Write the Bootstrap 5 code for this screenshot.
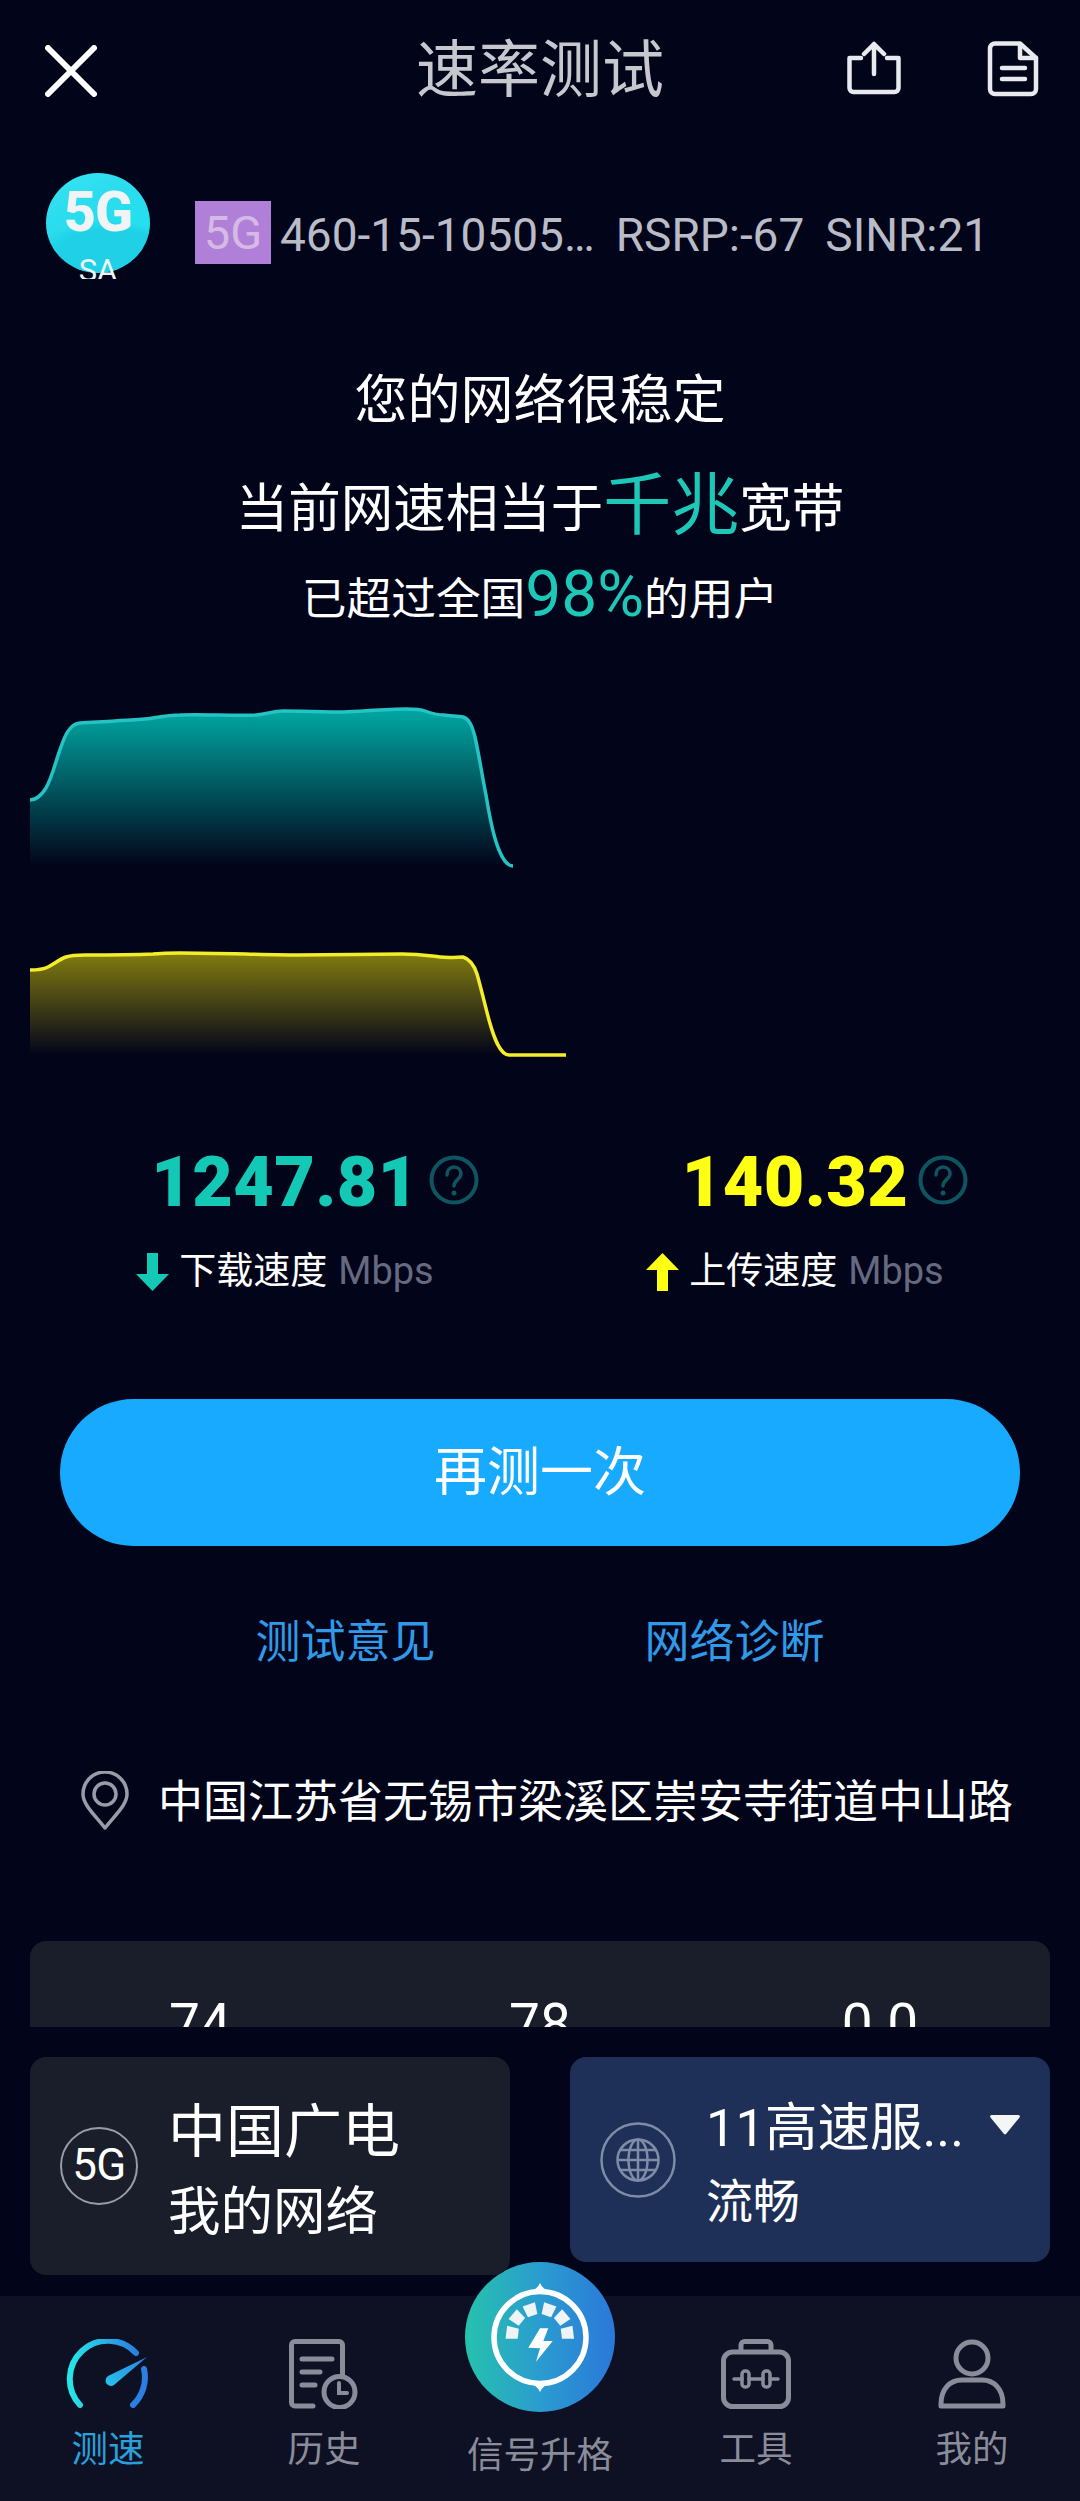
<!doctype html>
<html lang="zh-CN">
<head>
<meta charset="utf-8">
<title>速率测试</title>
<link href="https://cdn.jsdelivr.net/npm/bootstrap@5.3.0/dist/css/bootstrap.min.css" rel="stylesheet">
<style>
html,body{margin:0;background:#02041a;}
body{font-family:Roboto,"Noto Sans CJK SC",sans-serif;color:#fff;}
.app-shell{width:1080px;height:2501px;background:#02041a;}
.scroll-area{height:2027px;}
.top-bar{display:grid;grid-template-columns:1fr auto 1fr;height:140px;padding:0 41px;}
.close-icon{margin-left:4px;}
.top-title{font-size:62px;line-height:142px;color:#c6c8ce;}
.top-actions{gap:85px;margin-top:-5px;}
.status-row{height:108px;margin-top:32px;padding-left:46px;}
.sa-wrap{width:104px;height:106px;flex:none;}
.sa-disc{width:104px;height:100px;border-radius:50%;background:radial-gradient(ellipse 70% 30% at 62% 78%,#1fd0e6 0 70%,transparent 100%),linear-gradient(150deg,#38e4f2 0,#2bdcee 35%,#1ee4ee 100%);color:#f1f4f6;font-weight:800;font-size:56px;line-height:1;padding-top:11px;letter-spacing:-1px;}
.sa-mark{font-size:31px;line-height:1;color:#eaf6fa;top:82px;left:0;width:104px;}
.rat-tag{width:76px;height:63px;background:#b07fd8;color:#d4bae4;font-size:47px;line-height:63px;margin-left:45px;margin-top:13px;flex:none;}
.cell-info{font-size:46px;line-height:56px;color:#b9bcc7;margin-left:9px;margin-top:17px;white-space:nowrap;}
.cell-info span+span{margin-left:21px;}
.hero{margin-top:69px;}
.hero-a{font-size:53px;line-height:104px;height:104px;}
.hero-b{font-size:52.500px;line-height:112px;height:103px;}
.hero-c{font-size:44.700px;line-height:88px;height:88px;}
.hero-big{font-size:68px;color:#1ec8b8;vertical-align:-2px;line-height:1;}
.hero-mid{font-size:64px;color:#1ec8b8;vertical-align:-1px;line-height:1;}
.chart-wrap{margin-top:56px;height:370px;}
.chart-wrap svg{display:block;}
.stat-block{margin-top:77px;padding:0 30px;}
.stat-num{font-size:70px;line-height:70px;font-weight:900;letter-spacing:.4px;}
.num-teal{color:#13c9b5;}
.num-yellow{color:#ffff14;}
.q-mark{position:absolute;left:100%;top:8px;margin-left:10px;}
.stat-label{font-size:37px;line-height:44px;margin-top:32px;gap:10px;}
.stat-unit{color:#666a80;font-size:38px;margin-left:11px;}
.retry-wrap{margin-top:105px;padding:0 60px;}
.retry-btn{background:#18aaff;border:0;height:147px;font-size:53px;color:#fff;padding-top:8px;}
.retry-btn:hover{background:#18aaff;color:#fff;}
.link-row{gap:209px;margin-top:67px;font-size:45px;line-height:60px;}
.link-row a{color:#2f9ae8;text-decoration:none;}
.place-row{padding-left:81px;gap:29px;margin-top:98px;font-size:45px;line-height:64px;white-space:nowrap;}
.pin-icon{margin-top:-4px;flex:none;}
.metric-card{margin:106px 30px 0;height:200px;background:#1a1d2a;border:0;border-radius:16px;padding-top:53px;}
.metric-val{font-size:55px;color:#fff;line-height:60px;}
.bottom-dock{height:269px;padding:30px 30px 0;gap:60px;}
.dock-card{width:480px;border:0;border-radius:16px;flex-direction:row;color:#fff;}
.dock-left{height:218px;background:#1a1d2a;padding:0 0 0 30px;}
.dock-right{height:205px;background:#1e3057;padding:0 0 0 30px;}
.ring-5g{width:78px;height:78px;border:2.500px solid #9a9ba6;border-radius:50%;font-size:44px;line-height:72px;text-align:center;flex:none;letter-spacing:-.5px;margin-top:70px;}
.ring-globe{flex:none;margin-top:65px;}
.dock-text-l{margin-left:30px;}
.dock-text-r{margin-left:30px;}
.dock-a{font-size:58px;line-height:80px;margin-top:35px;white-space:nowrap;}
.dock-b{font-size:52.500px;line-height:76px;margin-top:2px;white-space:nowrap;}
.dock-c{font-size:52.500px;line-height:76px;margin-top:33px;white-space:nowrap;}
.dock-d{font-size:47px;line-height:70px;margin-top:1px;white-space:nowrap;}
.dock-caret{position:absolute;right:30px;top:58px;}
.tab-bar{height:205px;background:#0e1124;}
.tab-item{width:216px;color:#8a8c99;font-size:36.500px;line-height:44px;padding-top:43px;}
.tab-item svg{display:block;}
.tab-item .tab-text{margin-top:19px;white-space:nowrap;}
.tab-on{color:#2a9fd8;}
.tab-raised{padding-top:0;margin-top:-34px;}
.tab-raised .tab-text{margin-top:22px;}
</style>
</head>
<body>
<div class="app-shell d-flex flex-column">
  <div class="scroll-area overflow-hidden">
    <div class="top-bar align-items-center">
      <svg class="close-icon" width="52" height="52" viewBox="0 0 52 52" aria-label="关闭"><path d="M3 3 49 49M49 3 3 49" stroke="#fff" stroke-width="6" stroke-linecap="round" fill="none"/></svg>
      <div class="top-title">速率测试</div>
      <div class="d-flex justify-content-end top-actions">
        <svg width="56" height="54" viewBox="0 0 56 54" fill="none" stroke="#e9eaee" stroke-width="4.500" stroke-linecap="round" stroke-linejoin="round"><path d="M15 17H3.500V47a4 4 0 0 0 4 4H48.500a4 4 0 0 0 4-4V17H41"/><path d="M28 33V3M18 13 28 3 38 13"/></svg>
        <svg width="52" height="56" viewBox="0 0 52 56" fill="none" stroke="#e9eaee" stroke-width="4.500" stroke-linecap="round" stroke-linejoin="round"><path d="M8 2.500H33L49 17V48a5 5 0 0 1-5 5H8a5 5 0 0 1-5-5V7.500a5 5 0 0 1 5-5Z"/><path d="M33 3V17H49M15 27H38M15 38H38"/></svg>
      </div>
    </div>

    <div class="status-row d-flex align-items-center">
      <div class="sa-wrap position-relative overflow-hidden">
        <div class="sa-disc text-center">5G</div>
        <div class="sa-mark position-absolute text-center">SA</div>
      </div>
      <div class="rat-tag text-center">5G</div>
      <div class="cell-info"><span>460-15-10505…</span><span>RSRP:-67</span><span>SINR:21</span></div>
    </div>

    <div class="hero text-center">
      <div class="hero-a">您的网络很稳定</div>
      <div class="hero-b">当前网速相当于<span class="hero-big">千兆</span>宽带</div>
      <div class="hero-c">已超过全国<span class="hero-mid">98%</span>的用户</div>
    </div>

    <div class="chart-wrap">
      <svg width="1080" height="370" viewBox="0 700 1080 370" fill="none">
        <defs>
          <linearGradient id="fillTeal" gradientUnits="userSpaceOnUse" x1="0" y1="709" x2="0" y2="866"><stop offset="0" stop-color="#00a8a3"/><stop offset="1" stop-color="#00a8a3" stop-opacity="0"/></linearGradient>
          <linearGradient id="fillYel" gradientUnits="userSpaceOnUse" x1="0" y1="953" x2="0" y2="1055"><stop offset="0" stop-color="#827c10"/><stop offset="1" stop-color="#827c10" stop-opacity="0"/></linearGradient>
        </defs>
        <path fill="url(#fillTeal)" d="M30 800C36 800 41 796 46 788C52 778 56 760 61 747C65 735 70 724 80 723C95 722 105 722 115 721C130 720 140 720 153 718C165 716 170 715 180 715C200 714 235 716 256 715C268 714 272 711 283 711C300 711 325 712 344 712C365 711 390 709 406 709C415 709 420 709 425 711C433 714 438 715 444 715C450 716 458 716 463 717C469 719 472 725 475 737C479 755 482 775 486 795C490 820 494 838 499 850C503 860 507 866 513 866H30Z"/>
        <path stroke="#25c4c4" stroke-width="3.500" d="M30 800C36 800 41 796 46 788C52 778 56 760 61 747C65 735 70 724 80 723C95 722 105 722 115 721C130 720 140 720 153 718C165 716 170 715 180 715C200 714 235 716 256 715C268 714 272 711 283 711C300 711 325 712 344 712C365 711 390 709 406 709C415 709 420 709 425 711C433 714 438 715 444 715C450 716 458 716 463 717C469 719 472 725 475 737C479 755 482 775 486 795C490 820 494 838 499 850C503 860 507 866 513 866"/>
        <path fill="url(#fillYel)" d="M30 970C38 970 44 969 48 967C54 964 60 959 66 957C72 955 78 955 85 955C100 955 130 955 153 954C165 953 170 953 180 953C215 953 270 955 298 955C320 955 375 954 402 954C420 954 430 956 440 957C450 958 458 957 463 957C470 959 474 965 477 974C481 988 485 1005 489 1020C494 1038 500 1055 509 1055H30Z"/>
        <path stroke="#f4ee2a" stroke-width="3.500" d="M30 970C38 970 44 969 48 967C54 964 60 959 66 957C72 955 78 955 85 955C100 955 130 955 153 954C165 953 170 953 180 953C215 953 270 955 298 955C320 955 375 954 402 954C420 954 430 956 440 957C450 958 458 957 463 957C470 959 474 965 477 974C481 988 485 1005 489 1020C494 1038 500 1055 509 1055H566"/>
      </svg>
    </div>

    <div class="stat-block row g-0">
      <div class="col-6 text-center">
        <div class="stat-num num-teal position-relative d-inline-block">1247.81<svg class="q-mark" width="50" height="50" viewBox="0 0 50 50" fill="none"><circle cx="25" cy="25" r="22.500" stroke="#0e5560" stroke-width="4"/><path d="M18 20c0-5 3-8 7-8s7 3 7 7c0 5-7 6-7 12" stroke="#0e5560" stroke-width="3.500" stroke-linecap="round"/><circle cx="25" cy="38" r="2.500" fill="#0e5560"/></svg></div>
        <div class="stat-label d-flex justify-content-center align-items-center">
          <svg width="33" height="38" viewBox="0 0 33 38"><path d="M11 0H22V21H33L16.500 38 0 21H11Z" fill="#13c9b5"/></svg>
          <div>下载速度<span class="stat-unit">Mbps</span></div>
        </div>
      </div>
      <div class="col-6 text-center">
        <div class="stat-num num-yellow position-relative d-inline-block">140.32<svg class="q-mark" width="50" height="50" viewBox="0 0 50 50" fill="none"><circle cx="25" cy="25" r="22.500" stroke="#0e5560" stroke-width="4"/><path d="M18 20c0-5 3-8 7-8s7 3 7 7c0 5-7 6-7 12" stroke="#0e5560" stroke-width="3.500" stroke-linecap="round"/><circle cx="25" cy="38" r="2.500" fill="#0e5560"/></svg></div>
        <div class="stat-label d-flex justify-content-center align-items-center">
          <svg width="33" height="38" viewBox="0 0 33 38"><path d="M11 38H22V17H33L16.500 0 0 17H11Z" fill="#ffff14"/></svg>
          <div>上传速度<span class="stat-unit">Mbps</span></div>
        </div>
      </div>
    </div>

    <div class="retry-wrap"><button type="button" class="btn retry-btn rounded-pill w-100">再测一次</button></div>

    <div class="link-row d-flex justify-content-center"><a href="#">测试意见</a><a href="#">网络诊断</a></div>

    <div class="place-row d-flex align-items-center">
      <svg class="pin-icon" width="48" height="60" viewBox="0 0 48 60" fill="none" stroke="#9a9ba8" stroke-width="3.500"><path d="M24 57C14 44 2 34 2 23a22 22 0 0 1 44 0C46 34 34 44 24 57Z" stroke-linejoin="round"/><circle cx="24" cy="23" r="11"/></svg>
      <div>中国江苏省无锡市梁溪区崇安寺街道中山路</div>
    </div>

    <div class="card metric-card">
      <div class="row g-0 text-center">
        <div class="col-4 metric-val">74</div>
        <div class="col-4 metric-val">78</div>
        <div class="col-4 metric-val">0.0</div>
      </div>
    </div>
  </div>

  <div class="bottom-dock d-flex align-items-start">
    <div class="card dock-card dock-left">
      <div class="ring-5g">5G</div>
      <div class="dock-text-l">
        <div class="dock-a">中国广电</div>
        <div class="dock-b">我的网络</div>
      </div>
    </div>
    <div class="card dock-card dock-right position-relative">
      <svg class="ring-globe" width="76" height="76" viewBox="0 0 76 76" fill="none" stroke="#7f8ca8" stroke-width="2.500"><circle cx="38" cy="38" r="36.500"/><circle cx="38" cy="38" r="20.500"/><ellipse cx="38" cy="38" rx="9.500" ry="20.500"/><path d="M38 17.500V58.500M20 28H56M17.500 38H58.500M20 48H56"/></svg>
      <div class="dock-text-r">
        <div class="dock-c">11高速服...</div>
        <div class="dock-d">流畅</div>
      </div>
      <svg class="dock-caret" width="30" height="20" viewBox="0 0 30 20"><path d="M1.500 0H28.500a1.500 1.500 0 0 1 1 2.500L16 19a1.500 1.500 0 0 1-2 0L.5 2.500A1.500 1.500 0 0 1 1.500 0Z" fill="#f4f5f7"/></svg>
    </div>
  </div>

  <nav class="tab-bar d-flex">
    <div class="tab-item tab-on d-flex flex-column align-items-center">
      <svg width="84" height="70" viewBox="0 0 84 70" fill="none">
        <defs><linearGradient id="gaugeG" x1="0" x2="1" y1="0" y2="0"><stop offset="0" stop-color="#27e6e8"/><stop offset="1" stop-color="#2b7fe2"/></linearGradient>
        <linearGradient id="needleG" x1="0" x2="1" y1="1" y2="0"><stop offset="0" stop-color="#26c6ee"/><stop offset="1" stop-color="#2b7fe2"/></linearGradient></defs>
        <path d="M14 66A38 38 0 0 1 70 14" stroke="url(#gaugeG)" stroke-width="6" stroke-linecap="round"/>
        <path d="M78 30A38 38 0 0 1 67 66" stroke="#2b7fe2" stroke-width="6" stroke-linecap="round"/>
        <path d="M81 18 42 37a5 5 0 0 0 6 9Z" fill="url(#needleG)"/>
      </svg>
      <div class="tab-text">测速</div>
    </div>
    <div class="tab-item d-flex flex-column align-items-center">
      <svg width="70" height="70" viewBox="0 0 70 70" fill="none" stroke="#8a8c99" stroke-width="5" stroke-linecap="round"><path d="M24 67H6a3.500 3.500 0 0 1-3.500-3.500V6A3.500 3.500 0 0 1 6 2.500H50A3.500 3.500 0 0 1 53.500 6V36"/><path d="M13 20H43M13 33H31M13 46H26"/><circle cx="50.500" cy="53" r="15.500"/><path d="M50 44V54H58" stroke-width="4"/></svg>
      <div class="tab-text">历史</div>
    </div>
    <div class="tab-item tab-raised d-flex flex-column align-items-center">
      <svg width="150" height="150" viewBox="0 0 150 150" fill="none">
        <defs><linearGradient id="fabG" x1="0" x2="1" y1="0" y2="0"><stop offset="0" stop-color="#26c2ad"/><stop offset=".5" stop-color="#2a9ccf"/><stop offset="1" stop-color="#2b78da"/></linearGradient></defs>
        <circle cx="75" cy="75" r="75" fill="url(#fabG)"/>
        <circle cx="75" cy="75.500" r="46" stroke="#fff" stroke-width="5.500"/>
        <path d="M62 31Q72 28 75 21Q78 28 88 31ZM62 120Q72 123 75 130Q78 123 88 120Z" fill="#fff"/>
        <g fill="#eef3f5">
          <polygon transform="translate(47.300 71) rotate(-83)" points="-6.500,-6 6.500,-6 5,6 -5,6"/>
          <polygon transform="translate(52.300 56) rotate(-50)" points="-6.500,-6 6.500,-6 5,6 -5,6"/>
          <polygon transform="translate(65.700 48) rotate(-19)" points="-6.500,-6 6.500,-6 5,6 -5,6"/>
          <polygon transform="translate(83.300 48) rotate(19)" points="-6.500,-6 6.500,-6 5,6 -5,6"/>
          <polygon transform="translate(96.700 56) rotate(50)" points="-6.500,-6 6.500,-6 5,6 -5,6"/>
          <polygon transform="translate(102.300 71) rotate(83)" points="-6.500,-6 6.500,-6 5,6 -5,6"/>
        </g>
        <path d="M75 66.300H83.300L78.300 79H87.700L71 99.700 75 86.300 63.300 85.700Z" fill="#fff"/>
      </svg>
      <div class="tab-text">信号升格</div>
    </div>
    <div class="tab-item d-flex flex-column align-items-center">
      <svg width="70" height="70" viewBox="0 0 70 70" fill="none" stroke="#8a8c99" stroke-width="5" stroke-linecap="round" stroke-linejoin="round"><rect x="2.500" y="13" width="65" height="54.500" rx="9"/><path d="M20 12V6a3.500 3.500 0 0 1 3.500-3.500H46.500A3.500 3.500 0 0 1 50 6V12"/><rect x="21" y="32" width="7" height="16" rx="3" stroke-width="3.500"/><rect x="42" y="32" width="7" height="16" rx="3" stroke-width="3.500"/><path d="M13 40H21M28 40H42M49 40H57" stroke-width="3.500"/></svg>
      <div class="tab-text">工具</div>
    </div>
    <div class="tab-item d-flex flex-column align-items-center">
      <svg width="68" height="70" viewBox="0 0 68 70" fill="none" stroke="#8a8c99" stroke-width="5" stroke-linejoin="round"><circle cx="34" cy="19" r="16"/><path d="M3 65C3 50 12 41 24 41H44C56 41 65 50 65 65V67H3Z"/></svg>
      <div class="tab-text">我的</div>
    </div>
  </nav>
</div>
<script src="https://cdn.jsdelivr.net/npm/bootstrap@5.3.0/dist/js/bootstrap.bundle.min.js"></script>
</body>
</html>
